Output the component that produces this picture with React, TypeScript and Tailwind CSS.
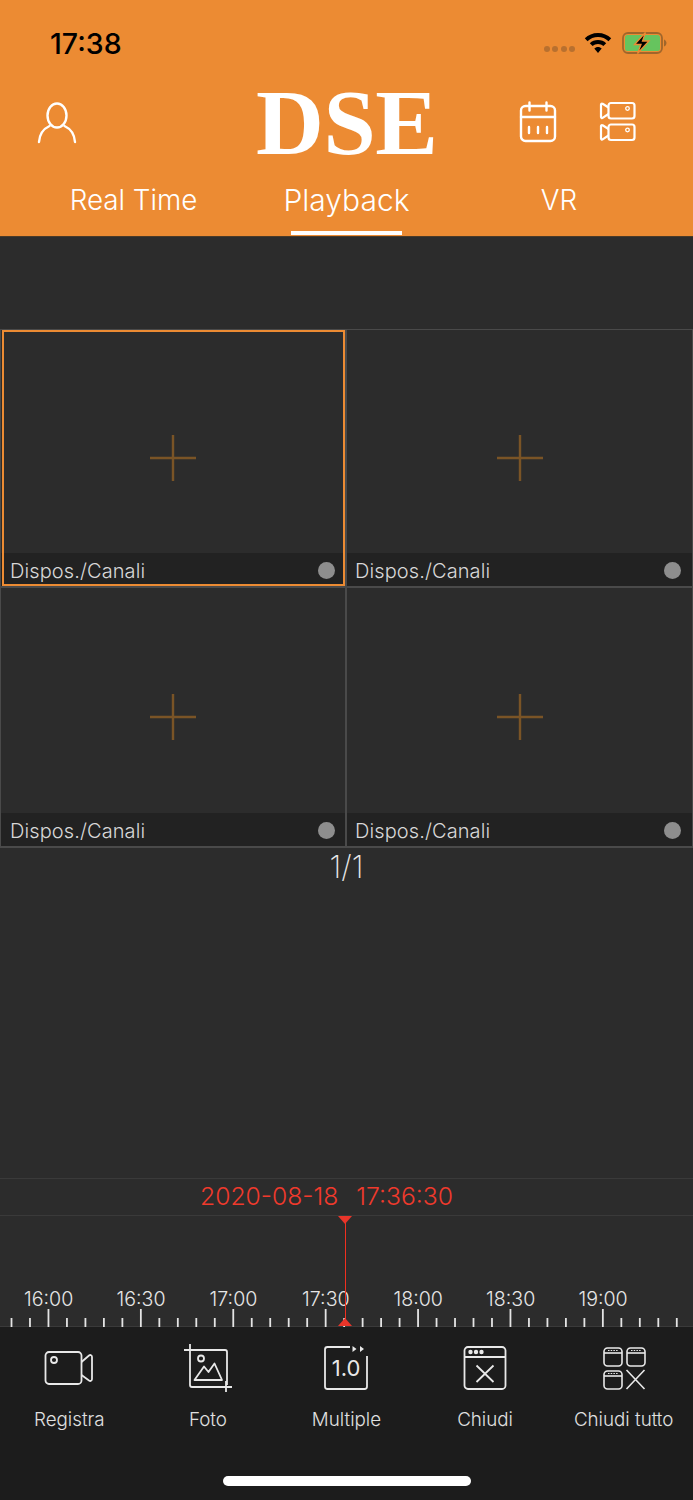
import React from "react";

const HOURS = ["16:00", "16:30", "17:00", "17:30", "18:00", "18:30", "19:00"];
const SANS = { fontFamily: "Inter, 'Liberation Sans', sans-serif" };

function UserIcon() {
  return (
    <svg width="40" height="44" viewBox="0 0 40 44" fill="none" stroke="#fff" strokeWidth="2.4" strokeLinecap="round">
      <ellipse cx="20" cy="15.5" rx="9.5" ry="12" />
      <path d="M12.5 26C6 29 2.5 35 2 42M27.5 26C34 29 37.5 35 38 42" />
    </svg>
  );
}

function CalendarIcon() {
  return (
    <svg width="38" height="42" viewBox="0 0 38 42" fill="none" stroke="#fff" strokeWidth="2.4" strokeLinecap="round">
      <rect x="2" y="5" width="34" height="35" rx="4.5" />
      <path d="M2 16H36M10.5 1.5V9.5M27.5 1.5V9.5M10 26V32M19 26V32M28 26V32" />
    </svg>
  );
}

function CamerasIcon() {
  const cam = "M12 2H33a2.5 2.5 0 0 1 2.5 2.5V15a2.5 2.5 0 0 1-2.5 2.5H12a2.5 2.5 0 0 1-2.5-2.5V4.500a2.5 2.5 0 0 1 2.5-2.5Z";
  const lens = "M9.5 6.5 3.6 2.8A1 1 0 0 0 2 3.600V16a1 1 0 0 0 1.6.8L9.5 13";
  return (
    <svg width="38" height="42" viewBox="0 0 38 42" fill="none" stroke="#fff" strokeWidth="2.2" strokeLinejoin="round">
      <path d={cam} />
      <path d={lens} />
      <circle cx="28.5" cy="7.5" r="1.8" strokeWidth="1.3" />
      <g transform="translate(0 21.5)">
        <path d={cam} />
        <path d={lens} />
        <circle cx="28.5" cy="7.5" r="1.8" strokeWidth="1.3" />
      </g>
    </svg>
  );
}

function StatusIcons() {
  return (
    <div className="mt-[7px] flex items-center">
      <div className="mr-[9px] mt-[11px] flex gap-[2.5px]">
        {[0, 1, 2, 3].map((i) => (
          <span key={i} className="h-[6px] w-[6px] rounded-full bg-[#b8702f]" />
        ))}
      </div>
      <svg width="28" height="22" viewBox="0 0 28 22" className="mr-[10px]">
        <path d="M14 1C8.7 1 4.300 3 .8 6.300L3.500 9.200C6.300 6.600 10 5 14 5s7.700 1.600 10.500 4.200l2.700-2.900C23.700 3 19.300 1 14 1Z" />
        <path d="M14 8c-3.200 0-6.100 1.200-8.200 3.200l2.800 2.900C10 12.800 11.900 12 14 12s4 .8 5.400 2.100l2.800-2.900C20.100 9.200 17.200 8 14 8Z" />
        <path d="M14 15c-1.500 0-2.800.6-3.700 1.500L14 21l3.700-4.500c-.9-.9-2.200-1.500-3.700-1.500Z" />
      </svg>
      <svg width="45" height="22" viewBox="0 0 45 22">
        <rect x="1" y="1" width="39" height="20" rx="5" fill="none" stroke="#a0662b" strokeWidth="1.800" />
        <rect x="3" y="3" width="35" height="16" rx="2.500" fill="#66c45e" />
        <path d="M42 7.500c1.500.5 2.500 2 2.500 3.500s-1 3-2.500 3.500Z" fill="#a0662b" />
        <path d="M23.500 .5 12.500 12.500h6.500L15.500 21.500 27 9h-6.500Z" stroke="#ec8b33" strokeWidth="1.300" />
      </svg>
    </div>
  );
}

function Cell({ active, right }: { active?: boolean; right?: boolean }) {
  return (
    <div className="relative flex flex-col border-[1px] border-[#4a4a4a]">
      {active ? <div className="pointer-events-none absolute inset-y-0 left-[1px] right-0 border-[2px] border-[#ec8b33]" /> : null}
      <div className="flex flex-1 items-center justify-center pt-[33px]">
        <svg width="48" height="48" viewBox="0 0 48 48" stroke="#7a5426" strokeWidth="2.400">
          <path d="M24 1V47M1 24H47" />
        </svg>
      </div>
      <div className={`flex h-[33px] items-center justify-between bg-[#222222] pt-[2px] ${right ? "pl-[8px] pr-[11px]" : "pl-[9px] pr-[10px]"}`}>
        <span className="text-[20px] font-light tracking-[0.1px] text-[#d8d8d8]" style={SANS}>Dispos./Canali</span>
        <span className="h-[17px] w-[17px] rounded-full bg-[#8e8e8e]" />
      </div>
    </div>
  );
}

function Ticks() {
  const ticks = Array.from({ length: 37 }, (_, i) => i);
  return (
    <svg width="693" height="18" viewBox="0 0 693 18" className="block" stroke="#e4e4e4" strokeWidth="1.800">
      {ticks.map((i) => {
        const x = 11.5 + i * 18.48;
        const major = (i - 2) % 5 === 0;
        return <line key={i} x1={x} x2={x} y1={major ? 0 : 9} y2={18} />;
      })}
    </svg>
  );
}

function RecordIcon() {
  return (
    <svg width="50" height="36" viewBox="0 0 50 36" fill="none" stroke="#e8e8e8" strokeWidth="1.800">
      <rect x="1.500" y="2" width="36" height="32" rx="3.500" />
      <circle cx="10" cy="10" r="3" />
      <path d="M37.500 12 45 5.500c1.500-1 3-.3 3 1.500v22c0 1.800-1.500 2.500-3 1.500L37.500 25" />
    </svg>
  );
}

function PhotoIcon() {
  return (
    <svg width="50" height="50" viewBox="0 0 50 50" fill="none" stroke="#e8e8e8" strokeWidth="1.800">
      <path d="M1 7H42a2 2 0 0 1 2 2V42M7 1V42a2 2 0 0 0 2 2H49M43 38V49" />
      <circle cx="18" cy="15.500" r="3" />
      <path d="M11.500 37 21 23.500 25.500 29 31.500 20.500 39 37Z" strokeLinejoin="round" />
    </svg>
  );
}

function MultipleIcon() {
  return (
    <svg width="46" height="46" viewBox="0 0 46 46" fill="none" stroke="#e8e8e8" strokeWidth="1.800">
      <path d="M27 2H4.500A2.500 2.500 0 0 0 2 4.500V41.500A2.500 2.500 0 0 0 4.500 44H41.500A2.500 2.500 0 0 0 44 41.500V11" />
      <path d="M29.500 1 33.500 4 29.500 7ZM37 1 41 4 37 7Z" fill="#e8e8e8" stroke="none" />
      <text x="23" y="31" textAnchor="middle" fill="#e8e8e8" stroke="none" fontSize="22" style={SANS}>1.0</text>
    </svg>
  );
}

function CloseWindowIcon() {
  return (
    <svg width="44" height="46" viewBox="0 0 44 46" fill="none" stroke="#e8e8e8" strokeWidth="1.800">
      <rect x="1.500" y="2" width="41" height="42" rx="3.500" />
      <path d="M1.500 12H42.500M13.500 20.500 30.500 37M30.500 20.500 13.500 37" />
      <circle cx="7.500" cy="7" r="1.300" fill="#e8e8e8" />
      <circle cx="13" cy="7" r="1.300" fill="#e8e8e8" />
      <circle cx="18.500" cy="7" r="1.300" fill="#e8e8e8" />
    </svg>
  );
}

function CloseAllIcon() {
  const win = (x: number, y: number) => (
    <g transform={`translate(${x} ${y})`}>
      <rect x="1" y="1" width="18" height="18" rx="3.500" />
      <path d="M1 6H19" />
      <path d="M5 3.500H15" strokeDasharray="1.500 1.200" strokeWidth="1.100" />
    </g>
  );
  return (
    <svg width="44" height="46" viewBox="0 0 44 46" fill="none" stroke="#e8e8e8" strokeWidth="1.600">
      {win(1, 2)}
      {win(24, 2)}
      {win(1, 25)}
      <path d="M24.500 25 42.500 44M42.500 25 24.500 44" />
    </svg>
  );
}

const ACTIONS = [
  { label: "Registra", icon: <RecordIcon /> },
  { label: "Foto", icon: <PhotoIcon /> },
  { label: "Multiple", icon: <MultipleIcon /> },
  { label: "Chiudi", icon: <CloseWindowIcon /> },
  { label: "Chiudi tutto", icon: <CloseAllIcon /> },
];

export default function App() {
  return (
    <div className="flex h-[1500px] w-[693px] flex-col overflow-hidden bg-[#2c2c2c]" style={SANS}>
      <header className="h-[237px] shrink-0 border-b border-[#4a3a28] bg-[#ec8b33]">
        <div className="flex h-[84px] items-start justify-between pl-[50px] pr-[26px] pt-[27px]">
          <span className="text-[28.500px] font-medium leading-[34px] text-black">17:38</span>
          <div className="mt-[-2px]"><StatusIcons /></div>
        </div>
        <div className="flex h-[76px] items-center">
          <div className="flex w-[256px] pl-[37px]"><UserIcon /></div>
          <div className="w-[180px] whitespace-nowrap text-center text-[94px] font-bold leading-[76px] tracking-[-0.5px] text-white" style={{ fontFamily: "'Liberation Serif', serif" }}>
            DSE
          </div>
          <div className="flex flex-1 gap-[42px] pl-[83px]">
            <CalendarIcon />
            <CamerasIcon />
          </div>
        </div>
        <nav className="flex h-[76px] items-start pt-[9px]">
          <div className="w-[267px] text-center text-[27.800px] font-light leading-[62px] text-white">Real Time</div>
          <div className="flex w-[159px] flex-col items-center">
            <span className="text-[30px] font-light leading-[62px] text-white">Playback</span>
            <span className="h-[4px] w-[111px] bg-white" />
          </div>
          <div className="w-[266px] text-center text-[27.800px] font-light leading-[62px] text-white">VR</div>
        </nav>
      </header>

      <div className="mt-[92px] grid h-[518px] shrink-0 grid-cols-[346px_347px] grid-rows-[258px_260px]">
        <Cell active />
        <Cell right />
        <Cell />
        <Cell right />
      </div>
      <div className="h-[331px] shrink-0 border-t border-[#4a4a4a] pt-[2px] text-center text-[31px] font-extralight leading-[34px] text-[#e8e8e8]">1/1</div>

      <div className="flex h-[38px] shrink-0 items-center gap-[18px] border-y-[1.500px] border-[#3a3a3a] pl-[200px] text-[24.700px] font-light text-[#f03a2c]">
        <span>2020-08-18</span>
        <span>17:36:30</span>
      </div>

      <div className="relative h-[110px] shrink-0">
        <div className="absolute bottom-0 left-[345px] top-0 w-[1px] bg-[#f03020]" />
        <div className="absolute left-[338px] top-0 h-0 w-0 border-x-[7.500px] border-t-[8px] border-x-transparent border-t-[#e9352a]" />
        <div className="absolute bottom-0 left-[338px] h-0 w-0 border-x-[7.500px] border-b-[8px] border-x-transparent border-b-[#e9352a]" />
        <div className="flex pl-[2.500px] pt-[70px]">
          {HOURS.map((h) => (
            <span key={h} className="w-[92.400px] text-center text-[19.600px] font-light leading-[26px] text-[#e6e6e6]">{h}</span>
          ))}
        </div>
        <div className="mt-[-3px]"><Ticks /></div>
      </div>

      <footer className="flex flex-1 flex-col items-center border-t border-[#3a3a3a] bg-[#1c1c1c]">
        <div className="flex h-[145px] w-full">
          {ACTIONS.map((a) => (
            <div key={a.label} className="flex w-[138.600px] flex-col items-center">
              <div className="flex h-[81px] items-center">{a.icon}</div>
              <span className="mt-[1px] whitespace-nowrap text-[18.800px] font-light leading-[22px] text-[#e0e0e0]">{a.label}</span>
            </div>
          ))}
        </div>
        <div className="mt-[4px] h-[10px] w-[248px] rounded-full bg-white" />
      </footer>
    </div>
  );
}
